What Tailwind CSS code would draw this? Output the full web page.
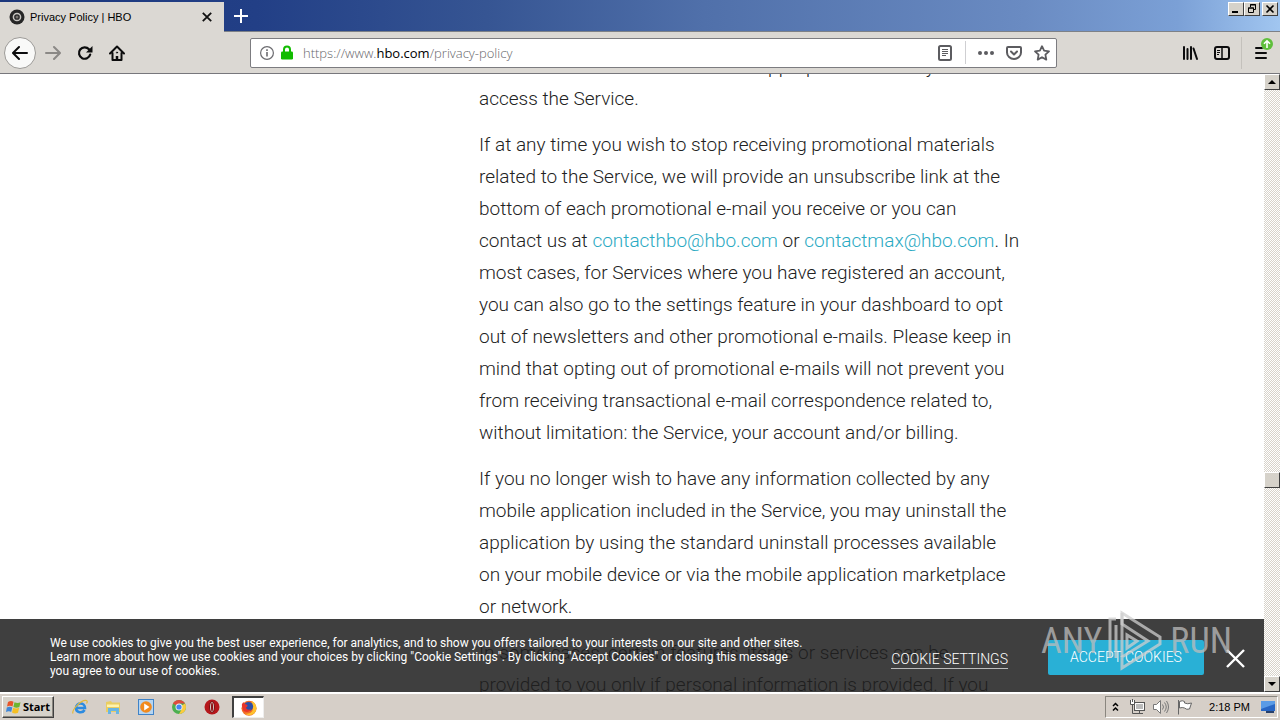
<!DOCTYPE html>
<html lang="en">
<head>
<meta charset="utf-8">
<title>Privacy Policy | HBO</title>
<script src="https://cdn.jsdelivr.net/npm/@tailwindcss/browser@4"></script>
</head>
<body class="h-screen overflow-hidden flex flex-col bg-white font-['Open_Sans','Noto_Sans',sans-serif] text-black">

<!-- Tab strip -->
<header class="h-8 shrink-0 flex items-stretch border-b border-[#7d8187] bg-[linear-gradient(90deg,#1b377c_0%,#223f86_20%,#365593_38%,#5070aa_55%,#6a8bc2_80%,#7ba0d6_92%,#a1c6f0_100%)]">
  <div class="mt-[2px] -mb-px w-56 flex items-center bg-[#dbd8d3] pl-[9px] pr-2 text-[11px] font-['Liberation_Sans',sans-serif]">
    <svg class="size-4 shrink-0" viewBox="0 0 16 16"><circle cx="8" cy="8" r="7.5" fill="#262626"/><circle cx="8" cy="8" r="3.6" fill="none" stroke="#c9c7c3" stroke-width="1.5"/><circle cx="8" cy="8" r="1.5" fill="#77736f"/></svg>
    <span class="ml-[5px] flex-1 whitespace-nowrap">Privacy Policy | HBO</span>
    <button aria-label="Close tab" class="size-[18px] grid place-items-center"><svg class="size-[10px]" viewBox="0 0 10 10"><path d="M.8.8l8.4 8.4M9.2.8L.8 9.2" stroke="#111" stroke-width="1.8"/></svg></button>
  </div>
  <button aria-label="New tab" class="ml-[9px] w-4 grid place-items-center"><svg class="size-[14px]" viewBox="0 0 14 14"><path d="M7 0v14M0 7h14" stroke="#fff" stroke-width="2"/></svg></button>
  <div class="flex-1"></div>
  <div class="flex items-start pt-[2px] pr-[2px]">
    <button aria-label="Minimize" class="w-4 h-[14px] bg-[#d6d2ca] border border-t-white border-l-white border-r-[#404040] border-b-[#404040]"><svg class="w-[14px] h-3" viewBox="0 0 14 12"><path d="M3 9h6" stroke="#000" stroke-width="2"/></svg></button>
    <button aria-label="Restore" class="w-4 h-[14px] bg-[#d6d2ca] border border-t-white border-l-white border-r-[#404040] border-b-[#404040]"><svg class="w-[14px] h-3" viewBox="0 0 14 12" fill="none" stroke="#000"><path d="M5.500 4V1.500h5v5H9M5 2h6M3.500 5v4.500h5V5zM3 5h6"/></svg></button>
    <button aria-label="Close" class="ml-[2px] w-4 h-[14px] bg-[#d6d2ca] border border-t-white border-l-white border-r-[#404040] border-b-[#404040]"><svg class="w-[14px] h-3" viewBox="0 0 14 12"><path d="M3.500 2.500l7 7M10.500 2.500l-7 7" stroke="#000" stroke-width="1.600"/></svg></button>
  </div>
</header>

<!-- Navigation toolbar -->
<nav class="h-[42px] shrink-0 flex items-center bg-[#dbd8d3] border-b border-[#77777c] pl-1 pr-[11px]">
  <button aria-label="Back" class="size-8 rounded-full bg-[#f9f9f8] border border-[#9c9a97] grid place-items-center"><svg class="size-4" viewBox="0 0 16 16" fill="none" stroke="#0c0c0d" stroke-width="2" stroke-linecap="round" stroke-linejoin="round"><path d="M15 8H1.500M7 2L1 8l6 6"/></svg></button>
  <button aria-label="Forward" class="ml-[9px] size-4"><svg viewBox="0 0 16 16" fill="none" stroke="#8b8986" stroke-width="2" stroke-linecap="round" stroke-linejoin="round"><path d="M1 8h13.500M9 2l6 6-6 6"/></svg></button>
  <button aria-label="Reload" class="ml-4 size-4"><svg viewBox="0 0 16 16"><path d="M13.200 9.500a5.700 5.700 0 1 1-1.200-5.200" fill="none" stroke="#0c0c0d" stroke-width="2.200" stroke-linecap="round"/><path d="M15.500 1v6.500H9z" fill="#0c0c0d"/></svg></button>
  <button aria-label="Home" class="ml-4 size-4"><svg viewBox="0 0 16 16" fill="none" stroke="#0c0c0d" stroke-width="2" stroke-linecap="round" stroke-linejoin="round"><path d="M1 8.500L8 1.500l7 7M3.500 8v7h9V8"/><path d="M8 15v-4" stroke-width="2.500" stroke-linecap="butt"/><circle cx="8" cy="7.600" r=".6" stroke-width="1"/></svg></button>
  <div class="ml-[125px] mr-[125px] h-[30px] flex-1 flex items-center rounded-[2px] border border-[#7c7c80] bg-white pl-[9px] pr-[6px]">
    <svg class="size-[14px] shrink-0" viewBox="0 0 14 14"><circle cx="7" cy="7" r="6.400" fill="none" stroke="#6c6c70" stroke-width="1.200"/><path d="M7 6v4.500M7 3.300v1.600" stroke="#6c6c70" stroke-width="1.600"/></svg>
    <svg class="ml-[7px] w-3 h-[15px] shrink-0" viewBox="0 0 12 15"><path d="M3 7V4.500a3 3 0 0 1 6 0V7" fill="none" stroke="#12bc00" stroke-width="2"/><rect y="6.500" width="12" height="8" rx="1.200" fill="#12bc00"/></svg>
    <label class="relative ml-[10px] flex-1 h-5">
      <input aria-label="Address" value="https://www.hbo.com/privacy-policy" class="absolute inset-0 w-full text-[13px] leading-5 text-transparent outline-none">
      <span class="absolute inset-0 pointer-events-none text-[13px] leading-5 font-light whitespace-nowrap text-[#66666a]">https://www.<span class="text-black font-normal">hbo.com</span>/privacy-policy</span>
    </label>
    <button aria-label="Reader view" class="size-4"><svg viewBox="0 0 16 16" fill="none" stroke="#5c5c60"><rect x="2" y="1" width="12" height="14" rx="1.500" stroke-width="2"/><path d="M5 4.500h6M5 6.500h6M5 8.500h6M5 10.500h4"/></svg></button>
    <span class="ml-3 w-px h-[23px] bg-[#cfcfd2]"></span>
    <button aria-label="Page actions" class="ml-3 size-4"><svg viewBox="0 0 16 16" fill="#5c5c60"><circle cx="2" cy="8" r="2"/><circle cx="8" cy="8" r="2"/><circle cx="14" cy="8" r="2"/></svg></button>
    <button aria-label="Save to Pocket" class="ml-3 size-4"><svg viewBox="0 0 16 16" fill="none" stroke="#5c5c60" stroke-width="2" stroke-linecap="round" stroke-linejoin="round"><path d="M2 2h12a1 1 0 0 1 1 1v4.500a7 6.500 0 0 1-14 0V3a1 1 0 0 1 1-1z"/><path d="M5 6.500l3 3 3-3"/></svg></button>
    <button aria-label="Bookmark" class="ml-3 size-4"><svg viewBox="0 0 16 16" fill="none" stroke="#5c5c60" stroke-width="1.800" stroke-linejoin="round"><path d="M8 1.200l2.100 4.500 4.900.6-3.600 3.400.9 4.900L8 12.200l-4.300 2.400.9-4.900L1 6.300l4.900-.6z"/></svg></button>
  </div>
  <button aria-label="Library" class="size-4"><svg viewBox="0 0 16 16" stroke="#0c0c0d" stroke-width="2" stroke-linecap="round"><path d="M2 2v12M5.500 4v10M9 2v12M11.500 3.500L15 14"/></svg></button>
  <button aria-label="Sidebars" class="ml-4 size-4"><svg viewBox="0 0 16 16" fill="none" stroke="#0c0c0d"><rect x="1" y="2" width="14" height="12" rx="2" stroke-width="2"/><path d="M8 2v12" stroke-width="1.500"/><path d="M3 5.500h3M3 7.500h3M3 9.500h2"/></svg></button>
  <span class="ml-[11px] w-px h-8 bg-[#c4c1bc]"></span>
  <button aria-label="Menu" class="relative ml-[11px] size-4"><svg class="size-4" viewBox="0 0 16 16" stroke="#0c0c0d" stroke-width="2" stroke-linecap="round"><path d="M3 3h6M3 8h10M3 13h10"/></svg><svg class="absolute left-2 -top-[7px] size-3" viewBox="0 0 12 12"><circle cx="6" cy="6" r="6" fill="#5fbf3c"/><path d="M6 10V3M3 5.800L6 2.800l3 3" fill="none" stroke="#fff" stroke-width="1.600"/></svg></button>
</nav>

<!-- Page viewport -->
<main class="relative flex-1 min-h-0 flex overflow-hidden">
  <article class="flex-1 min-w-0 h-full overflow-hidden pl-[479px]">
    <div class="-mt-[23px] flex flex-col gap-[14px] text-[19px] leading-8 font-light text-[#222] whitespace-nowrap font-['Roboto','Liberation_Sans',sans-serif]">
      <p>We need the email address so an appropriate user may<br>access the Service.</p>
      <p>If at any time you wish to stop receiving promotional materials<br>related to the Service, we will provide an unsubscribe link at the<br>bottom of each promotional e-mail you receive or you can<br>contact us at <a href="#" class="text-[#29a9c2]">contacthbo@hbo.com</a> or <a href="#" class="text-[#29a9c2]">contactmax@hbo.com</a>. In<br>most cases, for Services where you have registered an account,<br>you can also go to the settings feature in your dashboard to opt<br>out of newsletters and other promotional e-mails. Please keep in<br>mind that opting out of promotional e-mails will not prevent you<br>from receiving transactional e-mail correspondence related to,<br>without limitation: the Service, your account and/or billing.</p>
      <p>If you no longer wish to have any information collected by any<br>mobile application included in the Service, you may uninstall the<br>application by using the standard uninstall processes available<br>on your mobile device or via the mobile application marketplace<br>or network.</p>
      <p>In some cases, certain features, items or services can be<br>provided to you only if personal information is provided. If you</p>
    </div>
  </article>

  <!-- Scroll bar -->
  <div class="w-4 shrink-0 flex flex-col bg-[repeating-conic-gradient(#d8d3ca_0_25%,#fff_0_50%)] bg-size-[2px_2px]">
    <button aria-label="Scroll up" class="h-4 bg-[#d6d2ca] border border-t-white border-l-white border-r-[#404040] border-b-[#404040]"><svg class="size-[14px]" viewBox="0 0 14 14"><path d="M3 9h8L7 5z"/></svg></button>
    <div class="grow-[382] basis-0"></div>
    <div class="h-4 bg-[#d6d2ca] border border-t-white border-l-white border-r-[#404040] border-b-[#404040]"></div>
    <div class="grow-[188] basis-0"></div>
    <button aria-label="Scroll down" class="h-4 bg-[#d6d2ca] border border-t-white border-l-white border-r-[#404040] border-b-[#404040]"><svg class="size-[14px]" viewBox="0 0 14 14"><path d="M3 5h8L7 9z"/></svg></button>
  </div>

  <!-- Cookie notice -->
  <section class="absolute left-0 right-4 bottom-0 h-[73px] flex items-center bg-[#1f1f1f]/86 text-white pl-[50px] pr-[19px]">
    <p class="flex-1 text-[12px] leading-[14px] pt-[3px] whitespace-nowrap font-['Roboto','Liberation_Sans',sans-serif]">We use cookies to give you the best user experience, for analytics, and to show you offers tailored to your interests on our site and other sites.<br>Learn more about how we use cookies and your choices by clicking "Cookie Settings". By clicking "Accept Cookies" or closing this message<br>you agree to our use of cookies.</p>
    <button class="mt-2 border-b border-[#bbb] text-[14px] leading-[18px] font-light whitespace-nowrap font-['Roboto','Liberation_Sans',sans-serif]">COOKIE SETTINGS</button>
    <button class="mt-1 ml-10 w-[156px] h-[35px] rounded-[2px] bg-[#29b0d6] text-[14px] font-light whitespace-nowrap font-['Roboto','Liberation_Sans',sans-serif]">ACCEPT COOKIES</button>
    <button aria-label="Close notice" class="mt-[5px] ml-[22px] size-[19px]"><svg viewBox="0 0 19 19"><path d="M1 1l17 17M18 1L1 18" stroke="#fff" stroke-width="2.400"/></svg></button>
  </section>

  <!-- Watermark -->
  <div class="absolute right-12 bottom-[19px] h-[64px] flex items-center pointer-events-none text-[36px] leading-none text-[#bcbcbc]/75 font-['Roboto_Condensed','Open_Sans_Condensed','Noto_Sans_Condensed','DejaVu_Sans_Condensed',sans-serif]">
    <span>ANY</span>
    <svg class="mx-[6px] w-[56px] h-[64px]" viewBox="0 0 56 64" fill="none" stroke="#cfcfcf" stroke-opacity=".75" stroke-width="3"><path d="M2 49V10h6M8 49V16M14 4l38 24v7L14 59V48l26-16-26-17z"/><path d="M14 15v33M14 4v11M19 26v13l10-7z"/></svg>
    <span>RUN</span>
  </div>
</main>

<!-- Taskbar -->
<footer class="h-7 shrink-0 flex items-center bg-[#d6cfc8] border-t-2 border-white text-[11px]">
  <button class="ml-[2px] h-[22px] w-[52px] flex items-center justify-center gap-px bg-[#d6d2ca] border border-t-white border-l-white border-r-[#404040] border-b-[#404040] shadow-[inset_-1px_-1px_0_#8a867f] font-bold text-[11px] font-['Open_Sans',sans-serif]">
    <svg class="size-4" viewBox="0 0 16 16"><path d="M2 3q3-2 5.500-.2L6.500 7.500Q4 6 1 7.500z" fill="#e8552a"/><path d="M8.500 3.200q3 1.600 6 0L13.400 8q-3 1.500-6-.2z" fill="#6eb52f"/><path d="M.8 8.500q3-1.600 5.500-.1L5.200 13Q3 11.600 0 13z" fill="#3f86d8"/><path d="M7.200 8.800q3 1.600 6 0L12 13.700q-3 1.500-6-.2z" fill="#f5bf23"/></svg>Start</button>
  <button aria-label="Internet Explorer" class="ml-[18px] size-4"><svg viewBox="0 0 16 16" fill="none"><path d="M3.500 9h9.500c0-6-9-6-9 0 0 5 6.500 5.500 8.600 2" stroke="#2c8be0" stroke-width="2.600"/><path d="M1 14.500C-.5 11 9 .5 14.500 1.500c1.200.6.600 2.200 0 3" stroke="#e3b93a" stroke-width="1.200"/></svg></button>
  <button aria-label="File Explorer" class="ml-[17px] size-4"><svg viewBox="0 0 16 16"><path d="M1 3l5-1 1 1.500h8V13H1z" fill="#e9cd62"/><path d="M2 5.500h12V8H2z" fill="#fff3ac"/><path d="M3 15V9h11v6h-3v-3H6v3z" fill="#69b5e3"/></svg></button>
  <button aria-label="Media Player" class="ml-[17px] size-4"><svg viewBox="0 0 16 16"><rect x=".5" y=".5" width="15" height="15" fill="#b6d5f1" stroke="#3f83c8"/><circle cx="8" cy="8" r="5.800" fill="#f18a1d"/><path d="M6.200 4.500v7l5.300-3.500z" fill="#fff"/></svg></button>
  <button aria-label="Chrome" class="ml-[17px] size-4"><svg viewBox="0 0 16 16"><circle cx="8" cy="8" r="7" fill="#4caf50"/><path d="M8 8L1.900 4.500A7 7 0 0 1 14.100 4.600L8 4.600z" fill="#dd4b3e"/><path d="M8 8l6.100-3.400A7 7 0 0 1 8 15l3-5.300z" fill="#fccb3d"/><circle cx="8" cy="8" r="3.500" fill="#eee"/><circle cx="8" cy="8" r="2.600" fill="#4285f4"/></svg></button>
  <button aria-label="Opera" class="ml-[17px] size-4"><svg viewBox="0 0 16 16"><circle cx="8" cy="8" r="7.500" fill="#b5171b"/><ellipse cx="8" cy="8" rx="2.500" ry="5.500" fill="#d6cfc8" stroke="#7c0b0e"/><ellipse cx="8" cy="8" rx="1" ry="4.500" fill="#8e1013"/></svg></button>
  <button aria-label="Firefox" class="ml-3 w-8 h-[22px] grid place-items-center bg-white border-t-2 border-l-2 border-r border-b border-t-[#404040] border-l-[#404040] border-r-[#eee] border-b-[#eee]"><svg class="size-4" viewBox="0 0 16 16"><circle cx="8" cy="8.300" r="7.500" fill="#f26a25"/><path d="M11 1c5 3 6 9 2 12.500-3 2.500-7 2-9 0 5 1 8-2 8-5.500S10 4 11 1z" fill="#fdc22f"/><circle cx="7.500" cy="6.500" r="4.600" fill="#2c4fa8"/><path d="M.8 5C1 3.500 2 2.500 2.500 2c.3 1.500 1 2 2.500 2.200C7 5 7 6.500 5 7.500c.5 2.500 3 2.500 4.800 1.800C9 12.500 4 13 2 10z" fill="#e8342c"/></svg></button>
  <div class="flex-1"></div>
  <div class="mr-[2px] h-[22px] flex items-center border border-t-[#8a867f] border-l-[#8a867f] border-r-white border-b-white pl-[6px] pr-px">
    <button aria-label="Show hidden icons" class="w-2 h-3"><svg viewBox="0 0 8 12" fill="none" stroke="#000" stroke-width="1.500"><path d="M1 5l2.500-2.500L6 5M1 9.500L3.500 7 6 9.500"/></svg></button>
    <svg class="ml-[9px] size-4" viewBox="0 0 16 16" fill="none" stroke="#555"><rect x="5.500" y="3.500" width="10" height="8" fill="#bbb"/><path d="M6.500 4.500h8v6h-8z" stroke="#fff"/><path d="M7 14.500h7M10.500 12v2M3.500 6v8.500H7"/><path d="M1.500 1v4.500h4V1M3.500 0v3" fill="#fff"/></svg>
    <svg class="ml-2 size-4" viewBox="0 0 16 16" fill="none" stroke="#777"><path d="M.5 5.500h3l4-4v13l-4-4h-3z" fill="#fff"/><path d="M9.500 5.500q2 2.500 0 5M11.500 3.500q3.500 4.500 0 9M13.500 2q4 6 0 12"/></svg>
    <svg class="ml-2 size-4" viewBox="0 0 16 16" stroke="#666"><path d="M2.500 2.500q3-1.500 5 0v1.500q3 1.500 7 0l-2 6q-3 1-5-1-2-1-5 0z" fill="#fff"/><path d="M1.500 1v14.500"/></svg>
    <time class="ml-4 text-[11px] whitespace-nowrap font-['Liberation_Sans',sans-serif]">2:18 PM</time>
    <svg class="ml-[10px] size-4" viewBox="0 0 16 16"><path d="M1 2h14v10H1z" fill="#2866c4"/><path d="M1 2h14v3L1 10z" fill="#5a9be6"/><path d="M6 12h8v2H6z" fill="#27406b"/></svg>
  </div>
</footer>
</body>
</html>
